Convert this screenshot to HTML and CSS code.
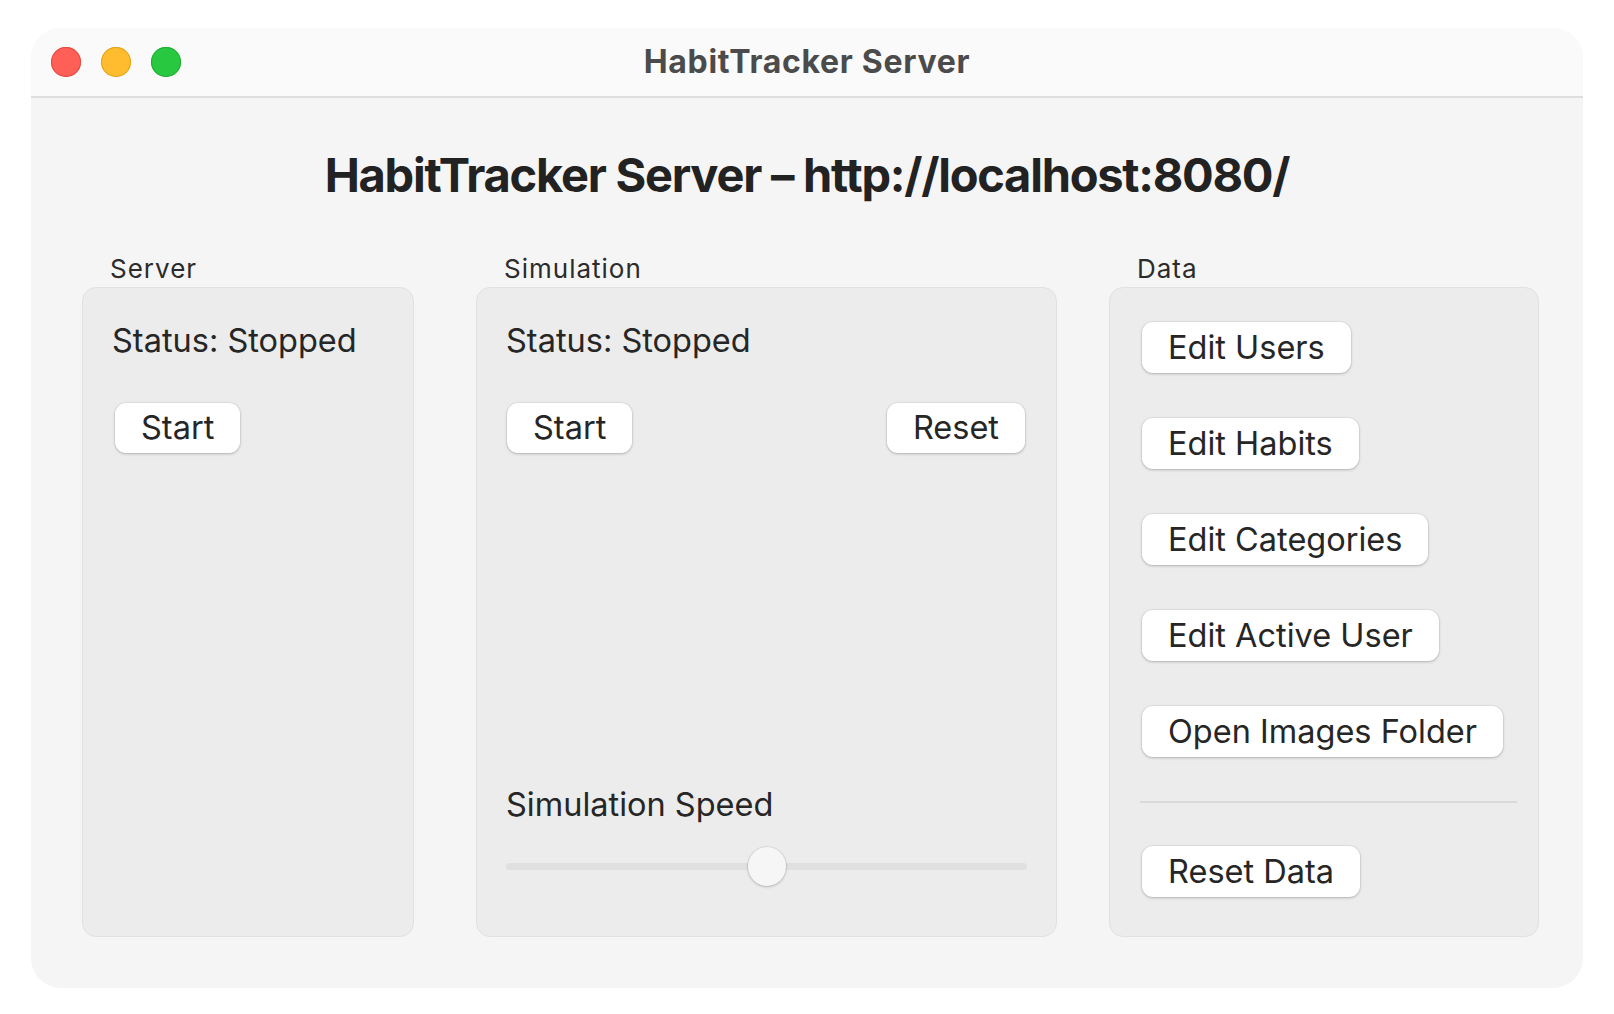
FILE: index.html
```html
<!DOCTYPE html>
<html lang="en">
<head>
<meta charset="utf-8">
<title>HabitTracker Server</title>
<link rel="stylesheet" href="styles.css">
</head>
<body>
<div class="window">
  <header class="titlebar">
    <div class="lights">
      <span class="light light-red"></span>
      <span class="light light-yellow"></span>
      <span class="light light-green"></span>
    </div>
    <div class="title">HabitTracker Server</div>
    <div></div>
  </header>
  <main class="content">
    <h1 class="heading">HabitTracker Server – http://localhost:8080/</h1>
    <div class="groups">
      <section class="group group-server">
        <div class="group-label">Server</div>
        <div class="box box-server">
          <div class="status">Status: Stopped</div>
          <div class="btn-row btn-row-single">
            <button class="btn">Start</button>
          </div>
        </div>
      </section>
      <section class="group group-sim">
        <div class="group-label">Simulation</div>
        <div class="box box-sim">
          <div class="status">Status: Stopped</div>
          <div class="btn-row btn-row-split">
            <button class="btn">Start</button>
            <button class="btn">Reset</button>
          </div>
          <div class="speed">
            <div class="speed-label">Simulation Speed</div>
            <div class="slider">
              <div class="slider-track"></div>
              <div class="slider-thumb"></div>
            </div>
          </div>
        </div>
      </section>
      <section class="group group-data">
        <div class="group-label">Data</div>
        <div class="box box-data">
          <div class="btn-list">
            <button class="btn">Edit Users</button>
            <button class="btn">Edit Habits</button>
            <button class="btn">Edit Categories</button>
            <button class="btn">Edit Active User</button>
            <button class="btn">Open Images Folder</button>
          </div>
          <hr class="separator">
          <div class="btn-list">
            <button class="btn">Reset Data</button>
          </div>
        </div>
      </section>
    </div>
  </main>
</div>
</body>
</html>
```

FILE: styles.css
```css
* {
  box-sizing: border-box;
}

html, body {
  margin: 0;
  padding: 0;
  background: #ffffff;
}

body {
  font-family: Inter, "Noto Sans", "Liberation Sans", sans-serif;
  color: #262626;
}

.window {
  margin: 28px 0 0 31px;
  width: 1552px;
  height: 960px;
  border-radius: 30px;
  overflow: hidden;
  background: #f5f5f5;
  display: flex;
  flex-direction: column;
}

.titlebar {
  height: 70px;
  flex: none;
  background: #fafafa;
  border-bottom: 2px solid #dedede;
  display: grid;
  grid-template-columns: 1fr auto 1fr;
  align-items: center;
}

.lights {
  display: flex;
  gap: 20px;
  padding-left: 20px;
}

.light {
  width: 30px;
  height: 30px;
  border-radius: 50%;
  display: block;
}

.light-red {
  background: #fe5f57;
  box-shadow: inset 0 0 0 1px #e5483f;
}

.light-yellow {
  background: #febc2e;
  box-shadow: inset 0 0 0 1px #e3a21c;
}

.light-green {
  background: #28c840;
  box-shadow: inset 0 0 0 1px #1fad31;
}

.title {
  font-size: 32px;
  font-weight: 700;
  color: #4b4b4b;
  line-height: 40px;
  letter-spacing: 0.7px;
}

.content {
  flex: 1;
  padding-top: 49px;
}

.heading {
  margin: 0 0 50px;
  text-align: center;
  font-size: 47px;
  line-height: 56px;
  font-weight: 700;
  color: #222222;
  letter-spacing: -1.25px;
}

.groups {
  display: flex;
  padding-left: 51px;
}

.group-server {
  width: 332px;
}

.group-sim {
  width: 581px;
  margin-left: 62px;
}

.group-data {
  width: 430px;
  margin-left: 52px;
}

.group-label {
  font-size: 26px;
  line-height: 32px;
  letter-spacing: 1px;
  margin: 0 0 2px 28px;
  color: #2b2b2b;
}

.box {
  height: 650px;
  background: #ececec;
  border: 1px solid #e1e1e1;
  border-radius: 14px;
  display: flex;
  flex-direction: column;
}

.box-server,
.box-sim {
  padding: 33px 30px 0 29px;
}

.box-sim {
  padding-right: 31px;
  padding-bottom: 50px;
}

.status {
  font-size: 32.5px;
  line-height: 40px;
  color: #262626;
}

.btn-row {
  display: flex;
  margin-top: 42px;
}

.btn-row-single {
  padding-left: 3px;
}

.btn-row-split {
  justify-content: space-between;
  padding-left: 1px;
}

.btn {
  font-family: inherit;
  font-size: 32.5px;
  line-height: 40px;
  color: #262626;
  height: 50px;
  padding: 0 26px;
  background: #ffffff;
  border: none;
  border-radius: 11px;
  box-shadow: 0 0 0 1px rgba(0, 0, 0, 0.04), 0 1px 3px rgba(0, 0, 0, 0.22);
  display: flex;
  align-items: center;
  justify-content: center;
  white-space: nowrap;
}

.speed {
  margin-top: auto;
}

.speed-label {
  font-size: 32.5px;
  line-height: 40px;
  color: #262626;
}

.slider {
  position: relative;
  margin-top: 21px;
  height: 40px;
}

.slider-track {
  position: absolute;
  left: 0;
  right: -2px;
  top: 17px;
  height: 7px;
  border-radius: 4px;
  background: #e0e0e0;
}

.slider-thumb {
  position: absolute;
  top: 1px;
  left: calc(50% - 18px);
  width: 38px;
  height: 39px;
  border-radius: 50%;
  background: #f6f6f6;
  box-shadow: 0 0 0 1px rgba(0, 0, 0, 0.05), 0 1px 3px rgba(0, 0, 0, 0.2);
}

.box-data {
  padding: 34px 21px 0 32px;
}

.btn-list {
  display: flex;
  flex-direction: column;
  align-items: flex-start;
  gap: 45px;
}

.btn-list .btn {
  height: 51px;
}

.separator {
  margin: 44px 0 43px -2px;
  border: none;
  height: 2px;
  background: #d9d9d9;
}
```
